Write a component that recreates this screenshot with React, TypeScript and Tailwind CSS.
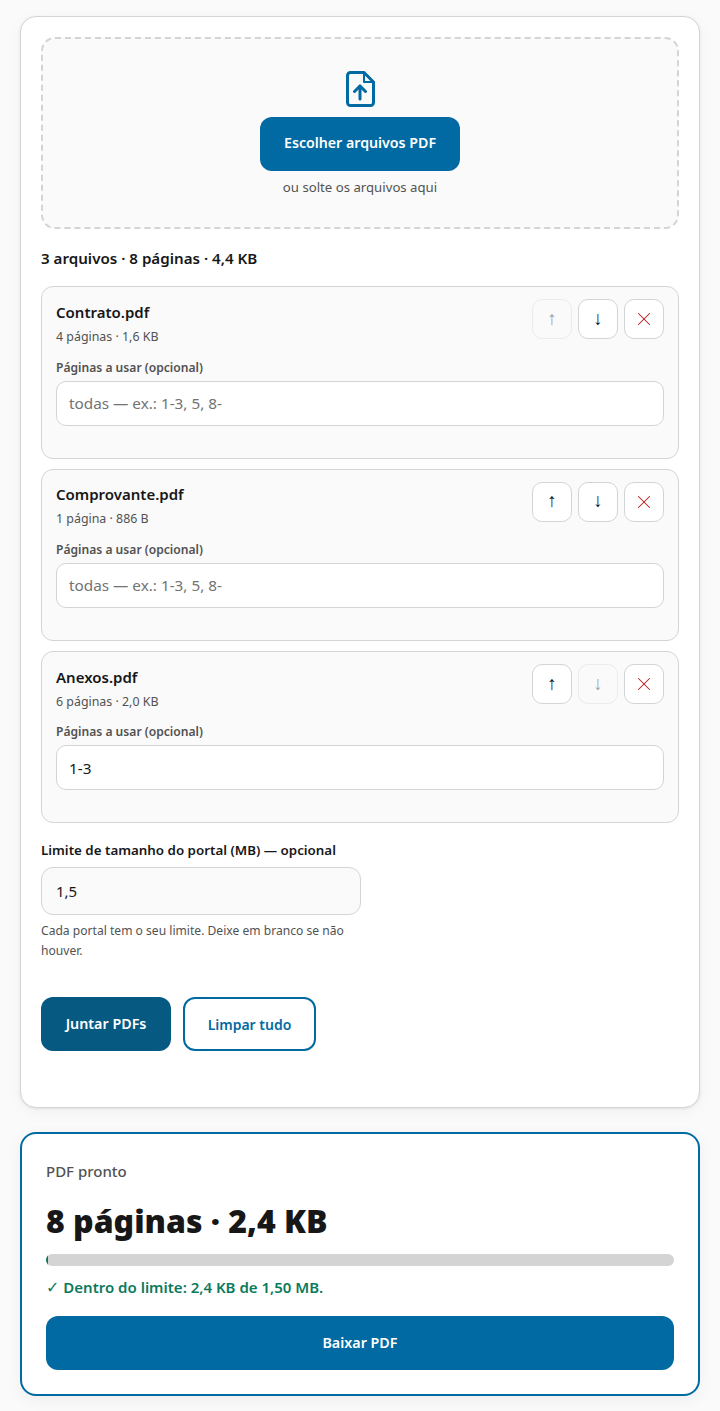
import { X } from "lucide-react";

// Linha de cada arquivo: nome, páginas e intervalo opcional
const files = [
  { name: "Contrato.pdf", meta: "4 páginas · 1,6 KB", value: "", first: true, last: false },
  { name: "Comprovante.pdf", meta: "1 página · 886 B", value: "", first: false, last: false },
  { name: "Anexos.pdf", meta: "6 páginas · 2,0 KB", value: "1-3", first: false, last: true },
];

function MoveButton({ dir, disabled }: { dir: "up" | "down"; disabled: boolean }) {
  return (
    <button
      disabled={disabled}
      className={
        disabled
          ? "w-10 h-10 flex items-center justify-center rounded-[10px] border border-[#ececec] bg-[#fafafa] text-[#a3a3a3] font-['Liberation_Sans',sans-serif] text-[19px]"
          : "w-10 h-10 flex items-center justify-center rounded-[10px] border border-[#d4d4d4] bg-white text-[#171717] font-['Liberation_Sans',sans-serif] text-[19px]"
      }
    >
      {dir === "up" ? "↑" : "↓"}
    </button>
  );
}

function FileRow({ file }: { file: (typeof files)[number] }) {
  return (
    <div className="rounded-xl border border-[#d4d4d4] bg-[#fafafa] px-[14px] pt-3 pb-[32.1px]">
      <div className="flex justify-between items-start">
        <div>
          <div className="text-[15px] leading-[24px] font-semibold text-[#171717] mt-[0.6px]">{file.name}</div>
          <div className="text-[12.4px] leading-[18px] text-[#525252] mt-[4px]">{file.meta}</div>
        </div>
        <div className="flex gap-[6px]">
          <MoveButton dir="up" disabled={file.first} />
          <MoveButton dir="down" disabled={file.last} />
          <button className="w-10 h-10 flex items-center justify-center rounded-[10px] border border-[#d4d4d4] bg-white text-[#b91c1c]">
            <X size={22} strokeWidth={1.1} />
          </button>
        </div>
      </div>
      <label className="block text-[12.1px] leading-[18px] font-semibold text-[#525252] mt-[12.7px] mb-1">
        Páginas a usar (opcional)
      </label>
      <input
        readOnly
        value={file.value}
        placeholder="todas — ex.: 1-3, 5, 8-"
        className="block w-full h-[45px] rounded-[10px] border border-[#d4d4d4] bg-white px-3 text-[15.3px] text-[#171717] placeholder:text-[#737373] outline-none"
      />
    </div>
  );
}

export default function App() {
  return (
    <div className="min-h-screen bg-[#fafafa] px-5 pt-4 pb-[15px] font-['Noto_Sans',sans-serif] text-[#171717]">
      <div className="rounded-2xl border border-[#d4d4d4] bg-white p-5 pb-14 shadow-[0_1px_3px_rgba(0,0,0,0.08),0_4px_16px_rgba(0,0,0,0.04)]">
        <div className="h-[192px] rounded-[14px] border-2 border-dashed border-[#d4d4d4] bg-[#fafafa] flex flex-col items-center pt-[30px]">
          <svg width="40" height="40" viewBox="0 0 40 40" fill="none" stroke="#026aa2" strokeWidth="3" strokeLinecap="round" strokeLinejoin="round">
            <path d="M24 3.5H10.5a3 3 0 0 0-3 3v27a3 3 0 0 0 3 3h20a3 3 0 0 0 3-3V13z" />
            <path d="M24 3.5V13h9.5" strokeWidth="2" />
            <path d="M20 30V17" />
            <path d="M14.5 22.5 20 17l5.5 5.5" />
          </svg>
          <button className="mt-2 w-[200px] h-[54px] pb-0.5 rounded-xl bg-[#026aa2] text-white text-[14.2px] font-semibold">
            Escolher arquivos PDF
          </button>
          <p className="mt-[7px] text-[13.2px] leading-[18px] text-[#525252]">ou solte os arquivos aqui</p>
        </div>

        <p className="mt-[18px] mb-[17.3px] text-[15.15px] leading-[22px] font-semibold">3 arquivos · 8 páginas · 4,4 KB</p>

        <div className="flex flex-col gap-[10px]">
          {files.map((f) => (
            <FileRow key={f.name} file={f} />
          ))}
        </div>

        <label className="block mt-[17.7px] text-[13.35px] leading-[18px] font-semibold">
          Limite de tamanho do portal (MB) — opcional
        </label>
        <input
          readOnly
          value="1,5"
          className="block mt-2 w-[320px] h-[48px] rounded-xl border border-[#d4d4d4] bg-[#fafafa] px-[14px] text-[15px] text-[#171717] outline-none"
        />
        <p className="mt-[6px] w-[320px] text-[12.1px] leading-[20px] text-[#525252]">
          Cada portal tem o seu limite. Deixe em branco se não houver.
        </p>

        <div className="flex gap-3 mt-[36px]">
          <button className="w-[130px] h-[54px] rounded-xl bg-[#065a82] text-white text-[14.3px] font-semibold">Juntar PDFs</button>
          <button className="w-[133px] h-[54px] rounded-xl border-2 border-[#026aa2] bg-white text-[#026aa2] text-[14px] font-semibold">
            Limpar tudo
          </button>
        </div>
      </div>

      <div className="mt-6 rounded-2xl border-2 border-[#026aa2] bg-white px-6 pt-[26px] pb-6 shadow-[0_4px_16px_rgba(0,0,0,0.05)]">
        <p className="text-[15px] leading-[22px] font-medium text-[#525252]">PDF pronto</p>
        <p className="mt-[18px] text-[32px] leading-[42px] font-black text-[#171717]">8 páginas · 2,4 KB</p>
        <div className="mt-3 h-3 rounded-full bg-[#d4d4d4] overflow-hidden">
          <div className="h-full w-[2px] bg-[#0b7a5c]" />
        </div>
        <p className="mt-[10px] h-[22px] text-[15px] leading-[22px] font-semibold text-[#0b7a5c]">
          <span className="font-['DejaVu_Sans',sans-serif] font-normal text-[16px] leading-none">✓</span> Dentro do limite: 2,4 KB de 1,50 MB.
        </p>
        <button className="mt-[18px] block w-full h-[54px] rounded-xl bg-[#026aa2] text-white text-[14.3px] font-semibold">Baixar PDF</button>
      </div>
    </div>
  );
}
